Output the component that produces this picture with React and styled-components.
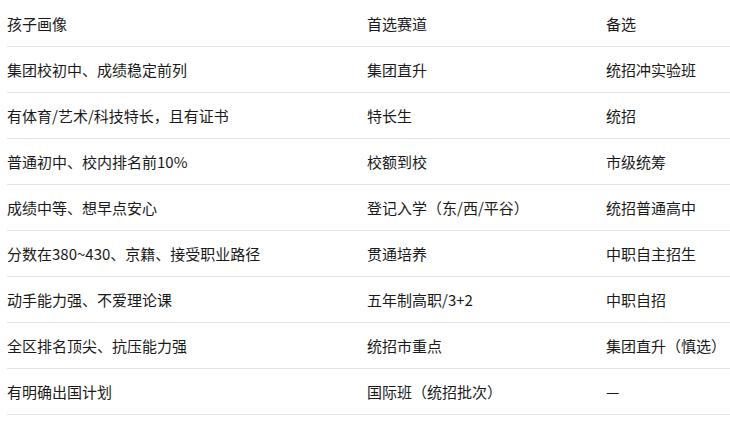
import React from "react";
import styled, { createGlobalStyle } from "styled-components";

const GlobalStyle = createGlobalStyle`
  html, body {
    margin: 0;
    padding: 0;
    background: #ffffff;
  }
  body {
    font-family: "Noto Sans CJK SC", "Liberation Sans", sans-serif;
    color: #1a1a1a;
  }
`;

const Table = styled.div`
  padding: 1px 0 0 7px;
  display: flex;
  flex-direction: column;
`;

const Row = styled.div`
  display: grid;
  grid-template-columns: 360px 239px 1fr;
  height: 46px;
  align-items: center;
  border-bottom: 1px solid #e3e3e3;
  box-sizing: border-box;
`;

const Cell = styled.div`
  font-size: 15px;
  line-height: 20px;
  white-space: nowrap;
`;

const header = ["孩子画像", "首选赛道", "备选"];

const rows = [
  ["集团校初中、成绩稳定前列", "集团直升", "统招冲实验班"],
  ["有体育/艺术/科技特长，且有证书", "特长生", "统招"],
  ["普通初中、校内排名前10%", "校额到校", "市级统筹"],
  ["成绩中等、想早点安心", "登记入学（东/西/平谷）", "统招普通高中"],
  ["分数在380~430、京籍、接受职业路径", "贯通培养", "中职自主招生"],
  ["动手能力强、不爱理论课", "五年制高职/3+2", "中职自招"],
  ["全区排名顶尖、抗压能力强", "统招市重点", "集团直升（慎选）"],
  ["有明确出国计划", "国际班（统招批次）", "—"],
];

const App = () => {
  return (
    <>
      <GlobalStyle />
      <Table>
        <Row>
          {header.map((h) => <Cell key={h}>{h}</Cell>)}
        </Row>
        {rows.map((r, i) => (
          <Row key={i}>
            {r.map((c, j) => <Cell key={j}>{c}</Cell>)}
          </Row>
        ))}
      </Table>
    </>
  );
};

export default App;
